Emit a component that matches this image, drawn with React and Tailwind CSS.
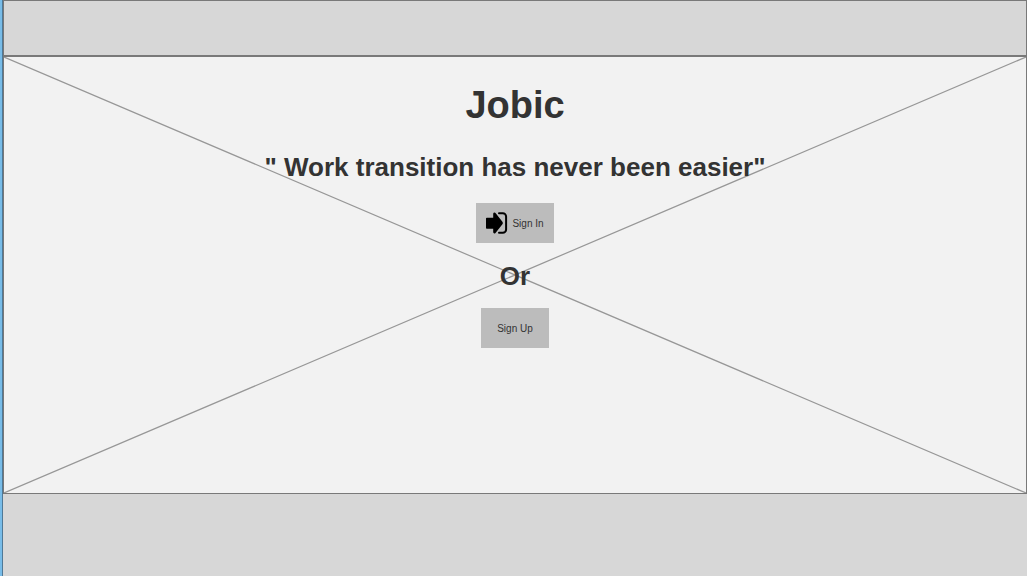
function SignInIcon() {
  return (
    <svg viewBox="0 0 22 24" className="h-6 w-[22px] shrink-0" aria-hidden="true">
      <path d="M.8 6.800H7.200V3c0-1.400 1.400-1.900 2.300-.9l6.900 8.600c.6.800.6 1.800 0 2.600l-6.900 8.600c-.9 1-2.300.500-2.300-.9V17.800H.8a.8.8 0 0 1-.8-.8V7.600a.8.8 0 0 1 .8-.8z" fill="#000" />
      <path d="M13 2.300h3.800a3.300 3.300 0 0 1 3.300 3.300v12.800a3.300 3.300 0 0 1-3.300 3.300H13" fill="none" stroke="#000" strokeWidth="2" strokeLinecap="round" />
    </svg>
  );
}

export default function App() {
  return (
    <div className="flex min-h-screen bg-white pr-0.5 pb-px font-['Liberation_Sans',Arial,sans-serif] text-[#333333]">
      <div className="w-[3px] shrink-0 border-r border-[#4f7896] bg-[#78bce8]" />
      <div className="flex min-w-0 grow flex-col">
        <header className="h-14 shrink-0 border border-[#797979] bg-[#d7d7d7]" />
        <main className="relative flex grow flex-col items-center border border-[#797979] bg-[#f2f2f2]">
          <svg className="absolute inset-0 h-full w-full" viewBox="0 0 100 100" preserveAspectRatio="none" aria-hidden="true">
            <path d="M0 0L100 100M0 100L100 0" fill="none" stroke="#979797" strokeWidth="1.2" vectorEffect="non-scaling-stroke" />
          </svg>
          <div className="relative flex flex-col items-center px-4 pt-[26px] text-center">
            <h1 className="text-[38px] leading-[44px] font-bold">Jobic</h1>
            <p className="mt-[25px] text-[26px] leading-[30px] font-bold">&quot; Work transition has never been easier&quot;</p>
            <button type="button" className="mt-[21px] flex h-10 items-center gap-1 bg-[#bcbcbc] px-2.5 text-[10px]">
              <SignInIcon />
              Sign In
            </button>
            <p className="mt-[18px] text-[26px] leading-[30px] font-bold">Or</p>
            <button type="button" className="mt-[17px] h-10 bg-[#bcbcbc] px-4 text-[10px]">
              Sign Up
            </button>
          </div>
        </main>
        <footer className="h-[82px] shrink-0 bg-[#d7d7d7]" />
      </div>
    </div>
  );
}
